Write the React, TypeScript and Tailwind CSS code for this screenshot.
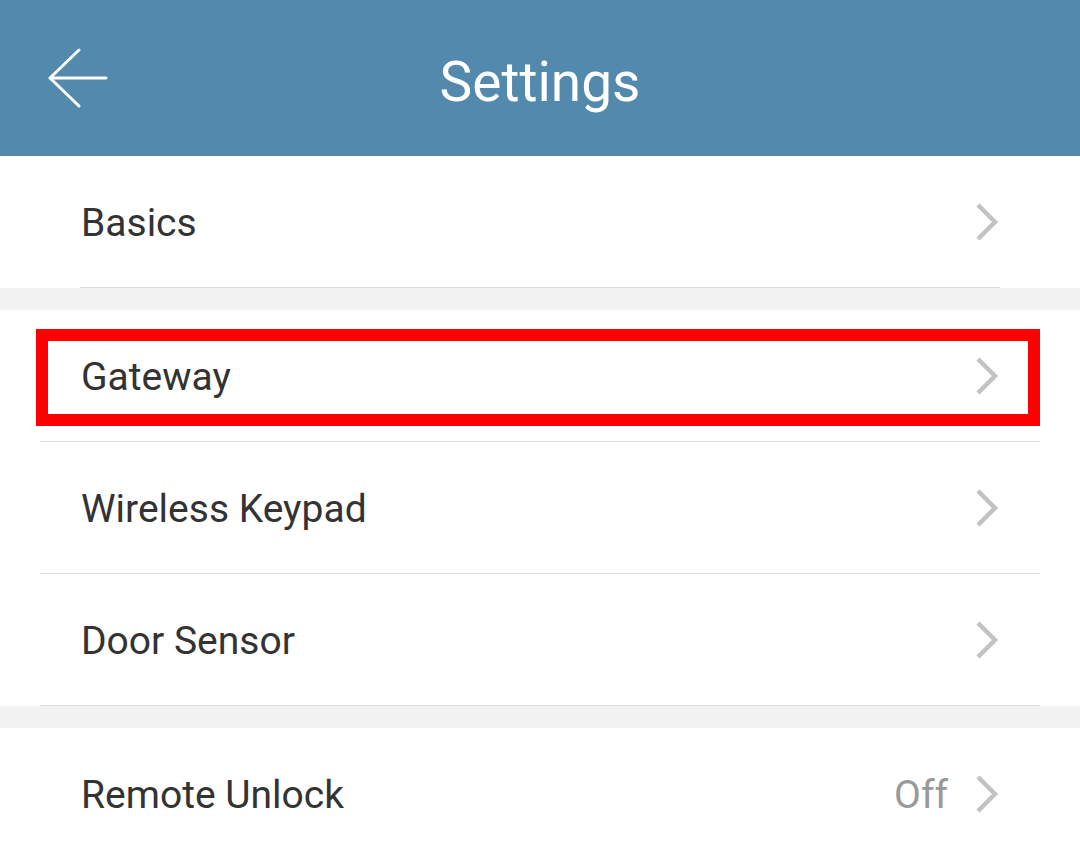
import React from "react";

function Chevron() {
  return (
    <svg width="26" height="40" viewBox="0 0 26 40" className="block">
      <path d="M4 3 L21 20 L4 37" fill="none" stroke="#c2c2c2" strokeWidth="4.5" />
    </svg>
  );
}

function Row({
  label,
  value,
  divider,
  highlight,
}: {
  label: string;
  value?: string;
  divider?: "inset" | "wide" | "none";
  highlight?: boolean;
}) {
  return (
    <div className="relative">
      <div className="flex h-[131px] items-center pl-[81px] pr-[80px]">
        <span className="flex-1 pt-[4px] text-[39px] leading-none text-[#333333]">{label}</span>
        {value && (
          <span className="mr-[26px] pt-[4px] text-[39px] leading-none text-[#999999]">{value}</span>
        )}
        <Chevron />
      </div>
      {divider === "inset" && <div className="mx-[80px] h-px bg-[#dcdcdc]" />}
      {divider === "wide" && <div className="mx-[40px] h-px bg-[#dcdcdc]" />}
      {highlight && (
        <div className="pointer-events-none absolute left-[36px] top-[19px] h-[97px] w-[1004px] border-[12px] border-[#ff0000]" />
      )}
    </div>
  );
}

export default function App() {
  return (
    <div
      className="h-[847px] w-[1080px] overflow-hidden bg-white"
      style={{ fontFamily: "Roboto, 'Noto Sans', sans-serif" }}
    >
      <header className="relative flex h-[156px] items-center justify-center bg-[#5289ac]">
        <svg
          width="62"
          height="60"
          viewBox="0 0 62 60"
          className="absolute left-[46px] top-[48px]"
        >
          <path
            d="M33 2 L4 30 L33 58 M4 30 L60 30"
            fill="none"
            stroke="#ffffff"
            strokeWidth="3"
            strokeLinecap="round"
            strokeLinejoin="round"
          />
        </svg>
        <h1 className="pt-[8px] text-[55px] font-normal leading-none text-white">Settings</h1>
      </header>
      <Row label="Basics" divider="inset" />
      <div className="h-[22px] bg-[#f2f2f2]" />
      <Row label="Gateway" divider="wide" highlight />
      <Row label="Wireless Keypad" divider="wide" />
      <Row label="Door Sensor" divider="wide" />
      <div className="h-[22px] bg-[#f2f2f2]" />
      <Row label="Remote Unlock" value="Off" divider="none" />
    </div>
  );
}
